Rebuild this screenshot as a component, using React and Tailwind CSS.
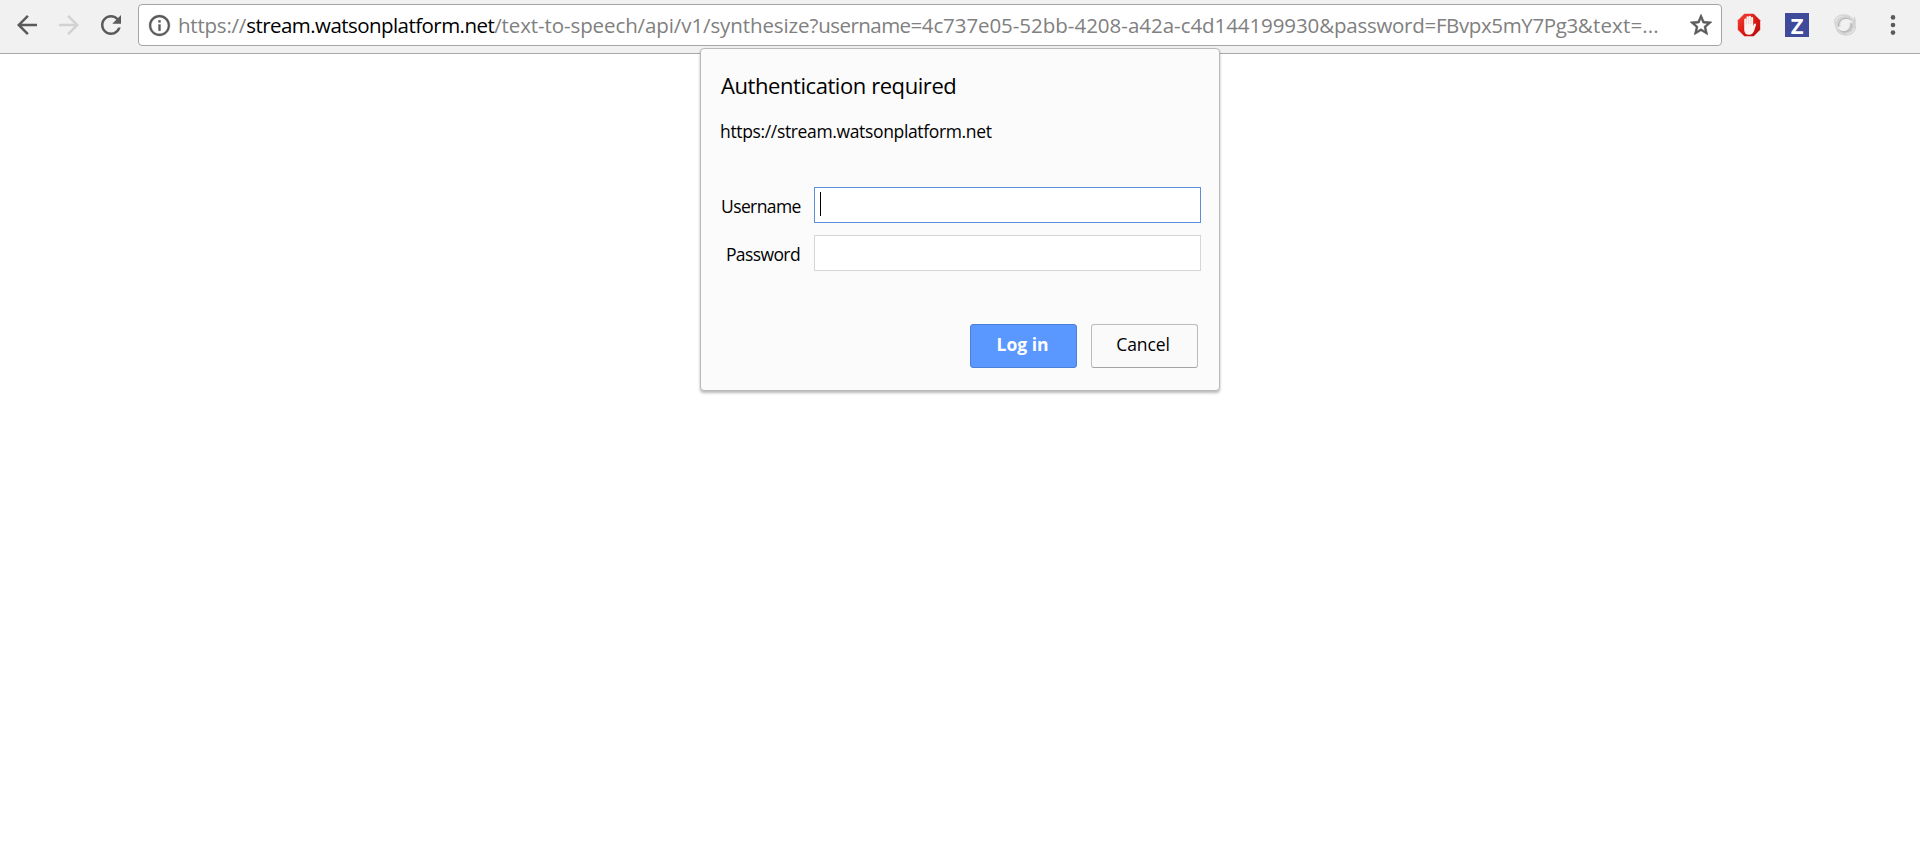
function BackIcon({ className }) {
  return (
    <svg viewBox="0 0 24 24" className={className} fill="currentColor">
      <path d="M20 11H7.83l5.59-5.59L12 4l-8 8 8 8 1.41-1.41L7.83 13H20v-2z" />
    </svg>
  );
}

function ReloadIcon({ className }) {
  return (
    <svg viewBox="0 0 24 24" className={className} fill="currentColor">
      <path d="M17.65 6.35C16.2 4.9 14.21 4 12 4c-4.42 0-7.99 3.58-7.99 8s3.57 8 7.99 8c3.73 0 6.84-2.55 7.73-6h-2.08c-.82 2.33-3.04 4-5.65 4-3.31 0-6-2.69-6-6s2.69-6 6-6c1.66 0 3.14.69 4.22 1.78L13 11h7V4l-2.35 2.35z" />
    </svg>
  );
}

function InfoIcon({ className }) {
  return (
    <svg viewBox="0 0 24 24" className={className} fill="currentColor" stroke="currentColor" strokeWidth="0.3">
      <path d="M11 17h2v-6h-2v6zm1-15C6.48 2 2 6.48 2 12s4.48 10 10 10 10-4.480 10-10S17.520 2 12 2zm0 18c-4.410 0-8-3.590-8-8s3.590-8 8-8 8 3.590 8 8-3.590 8-8 8zM11 9h2V7h-2v2z" />
    </svg>
  );
}

function StarIcon({ className }) {
  return (
    <svg viewBox="0 0 24 24" className={className} fill="currentColor" stroke="currentColor" strokeWidth="0.6">
      <path d="M22 9.24l-7.190-.62L12 2 9.190 8.630 2 9.240l5.460 4.730L5.820 21 12 17.270 18.180 21l-1.630-7.030L22 9.240zM12 15.400l-3.760 2.270 1-4.280-3.320-2.880 4.380-.38L12 6.100l1.710 4.040 4.380.38-3.320 2.880 1 4.280L12 15.400z" />
    </svg>
  );
}

function BlockerIcon({ className }) {
  return (
    <svg viewBox="0 0 24 24" className={className}>
      <defs>
        <linearGradient id="stop" x1="0" y1="0" x2="1" y2="1">
          <stop offset="0" stopColor="#f4453c" />
          <stop offset="0.5" stopColor="#dd1a14" />
          <stop offset="1" stopColor="#b30a08" />
        </linearGradient>
      </defs>
      <path d="M7.300.8h9.400l6.500 6.500v9.400l-6.500 6.500H7.300L.8 16.700V7.300z" fill="url(#stop)" />
      <path
        d="M7.200 13V6.500a1.100 1.100 0 0 1 2.200 0V4.300a1.100 1.100 0 0 1 2.300 0v-.5a1.100 1.100 0 0 1 2.300 0v1.200a1.100 1.100 0 0 1 2.200 0v8l.9-2c.5-1 2.200-.6 1.900.7l-1.700 5.500c-.8 2.700-2.400 4.600-5.200 4.600-3.200 0-4.900-2-4.900-5z"
        fill="#fbf3f0"
      />
      <path d="M9.400 6v5.500M11.700 4.500v6.500M14 5v6" stroke="#d9a9a2" strokeWidth="0.45" />
    </svg>
  );
}

function SwirlIcon({ className }) {
  return (
    <svg viewBox="0 0 24 24" className={className} fill="none">
      <path d="M1 9.500C1.500 4 6 .8 11.500 1.300c5.500.3 9.500 4 9.500 9C19 6.500 16 5.200 12.500 6 8.500 6.800 6.500 10 7.500 14c-3.500 0-6-1.500-6.500-4.500z" fill="#d4d4d4" />
      <path d="M23 14c-.8 5.500-5 8.800-10.500 8.500-4.500-.2-8-2.500-9.500-6.500 2.500 2.200 5.500 3 8.500 2 4-1.200 6-4.500 5-8.500 3.500 0 6 1.500 6.500 4.500z" fill="#cdcdcd" />
      <path d="M2 5c-2 6 .5 12.500 6 16.500 1.500.6 2.500.7 4 .5C7 19.500 4 15.500 4 10.500" fill="#d8d8d8" />
      <path d="M21.500 3c2.500 5.500 1.500 12-3 16.500 1-3 1.500-6 .5-9.500" fill="#d2d2d2" />
      <path d="M5.500 13.500C5 9 8 5.500 12.500 5.300c2.500 0 4.500.7 6 2.200" stroke="#b0b0b0" strokeWidth="0.9" />
      <path d="M18.500 11c.3 4.500-2.500 7.500-7 7.800-2.500 0-4.500-.9-6-2.500" stroke="#b0b0b0" strokeWidth="0.9" />
      <path d="M2.500 9C3.500 5 7 2.800 11 3M21.500 15c-1.500 4-4.500 6-8.500 6" stroke="#e8e8e8" strokeWidth="1.200" />
    </svg>
  );
}

function MenuIcon({ className }) {
  return (
    <svg viewBox="0 0 6 22" className={className} fill="currentColor">
      <circle cx="3" cy="3.400" r="2.300" />
      <circle cx="3" cy="11" r="2.300" />
      <circle cx="3" cy="18.600" r="2.300" />
    </svg>
  );
}

function Toolbar() {
  return (
    <header className="flex h-[54px] shrink-0 items-start border-b border-[#a9a9a9] bg-[#f1f1f1] pt-1 text-[#5a5a5a]">
      <div className="flex h-[42px] w-[138px] shrink-0 items-center gap-3 pl-3">
        <BackIcon className="size-[30px]" />
        <BackIcon className="size-[30px] rotate-180 text-[#d2d2d2]" />
        <ReloadIcon className="size-[30px]" />
      </div>
      <div className="flex h-[42px] w-[1584px] shrink-0 items-center rounded-[4px] border border-[#a5a5a5] bg-white pl-[8px]">
        <InfoIcon className="size-[25px] shrink-0" />
        <p className="ml-[6px] flex-1 whitespace-pre pb-px text-[20.5px] leading-[30px] text-[#808080]">
          <span className="tracking-[-0.22px]">https://</span>
          <span className="tracking-[-0.55px] text-black">stream.watsonplatform.net</span>
          <span className="tracking-[-0.1px]">/text-to-speech/api/v1/synthesize?</span>
          <span className="tracking-[-0.55px]">username=</span>
          <span className="tracking-[-0.08px]">4c737e05-</span>
          <span>52bb-4208-a42a-</span>
          <span className="tracking-[-0.09px]">c4d144199930&amp;</span>
          <span className="tracking-[-0.28px]">password=</span>
          <span className="tracking-[-0.37px]">FBvpx5mY7Pg3</span>
          <span className="tracking-[0.15px]">&amp;text=...</span>
        </p>
        <StarIcon className="mr-[7px] size-[26px] shrink-0" />
      </div>
      <div className="flex h-[42px] items-center pl-[15px]">
        <BlockerIcon className="size-6" />
        <div className="ml-6 flex size-6 items-center justify-center bg-[#3f4a9b] pb-px text-[22px] leading-none font-bold text-white">
          Z
        </div>
        <SwirlIcon className="ml-6 size-6" />
        <MenuIcon className="ml-[33px] h-[22px] w-[6px]" />
      </div>
    </header>
  );
}

function Field({ label, focused }) {
  return (
    <div className="flex h-9 items-center">
      <span className="mt-px w-[79px] text-right text-[17.5px] leading-6 tracking-[-0.6px]">{label}</span>
      <div
        className={
          focused
            ? "ml-[14px] flex h-9 w-[387px] border border-[#5b8fdb] bg-white pt-[4px] pl-[5px]"
            : "ml-[14px] flex h-9 w-[387px] border border-[#d6d6d6] bg-white"
        }
      >
        {focused && <span className="h-6 w-px bg-black" />}
      </div>
    </div>
  );
}

function AuthDialog() {
  return (
    <section className="absolute top-[48px] left-[700px] flex h-[343px] w-[520px] flex-col rounded-[4px] border border-[#b9b9b9] bg-[#fbfbfb] pt-[21px] pl-[20px] text-black shadow-[0_2px_3px_rgba(0,0,0,0.28)]">
      <h1 className="text-[22px] leading-[30px] tracking-[-0.43px]">Authentication required</h1>
      <p className="mt-[19px] -ml-px text-[17.5px] leading-6 tracking-[-0.35px]">https://stream.watsonplatform.net</p>
      <div className="mt-[44px] flex flex-col gap-3">
        <Field label="Username" focused />
        <Field label="Password" />
      </div>
      <div className="mt-[53px] flex justify-end gap-[14px] pr-[21px]">
        <button className="h-11 w-[107px] rounded-[3px] border border-[#4a80d8] bg-[#5a97ff] pr-[2px] pb-[3px] text-[17.5px] font-bold text-white">
          Log in
        </button>
        <button className="h-11 w-[107px] rounded-[3px] border border-[#bcbcbc] border-b-[#a4a4a4] bg-[#fafafa] pr-[3px] pb-[3px] text-[17.5px] tracking-[-0.1px]">
          Cancel
        </button>
      </div>
    </section>
  );
}

export default function App() {
  return (
    <div className="relative flex h-[846px] w-[1920px] flex-col overflow-hidden bg-white font-['Open_Sans','Noto_Sans',sans-serif]">
      <Toolbar />
      <AuthDialog />
    </div>
  );
}
